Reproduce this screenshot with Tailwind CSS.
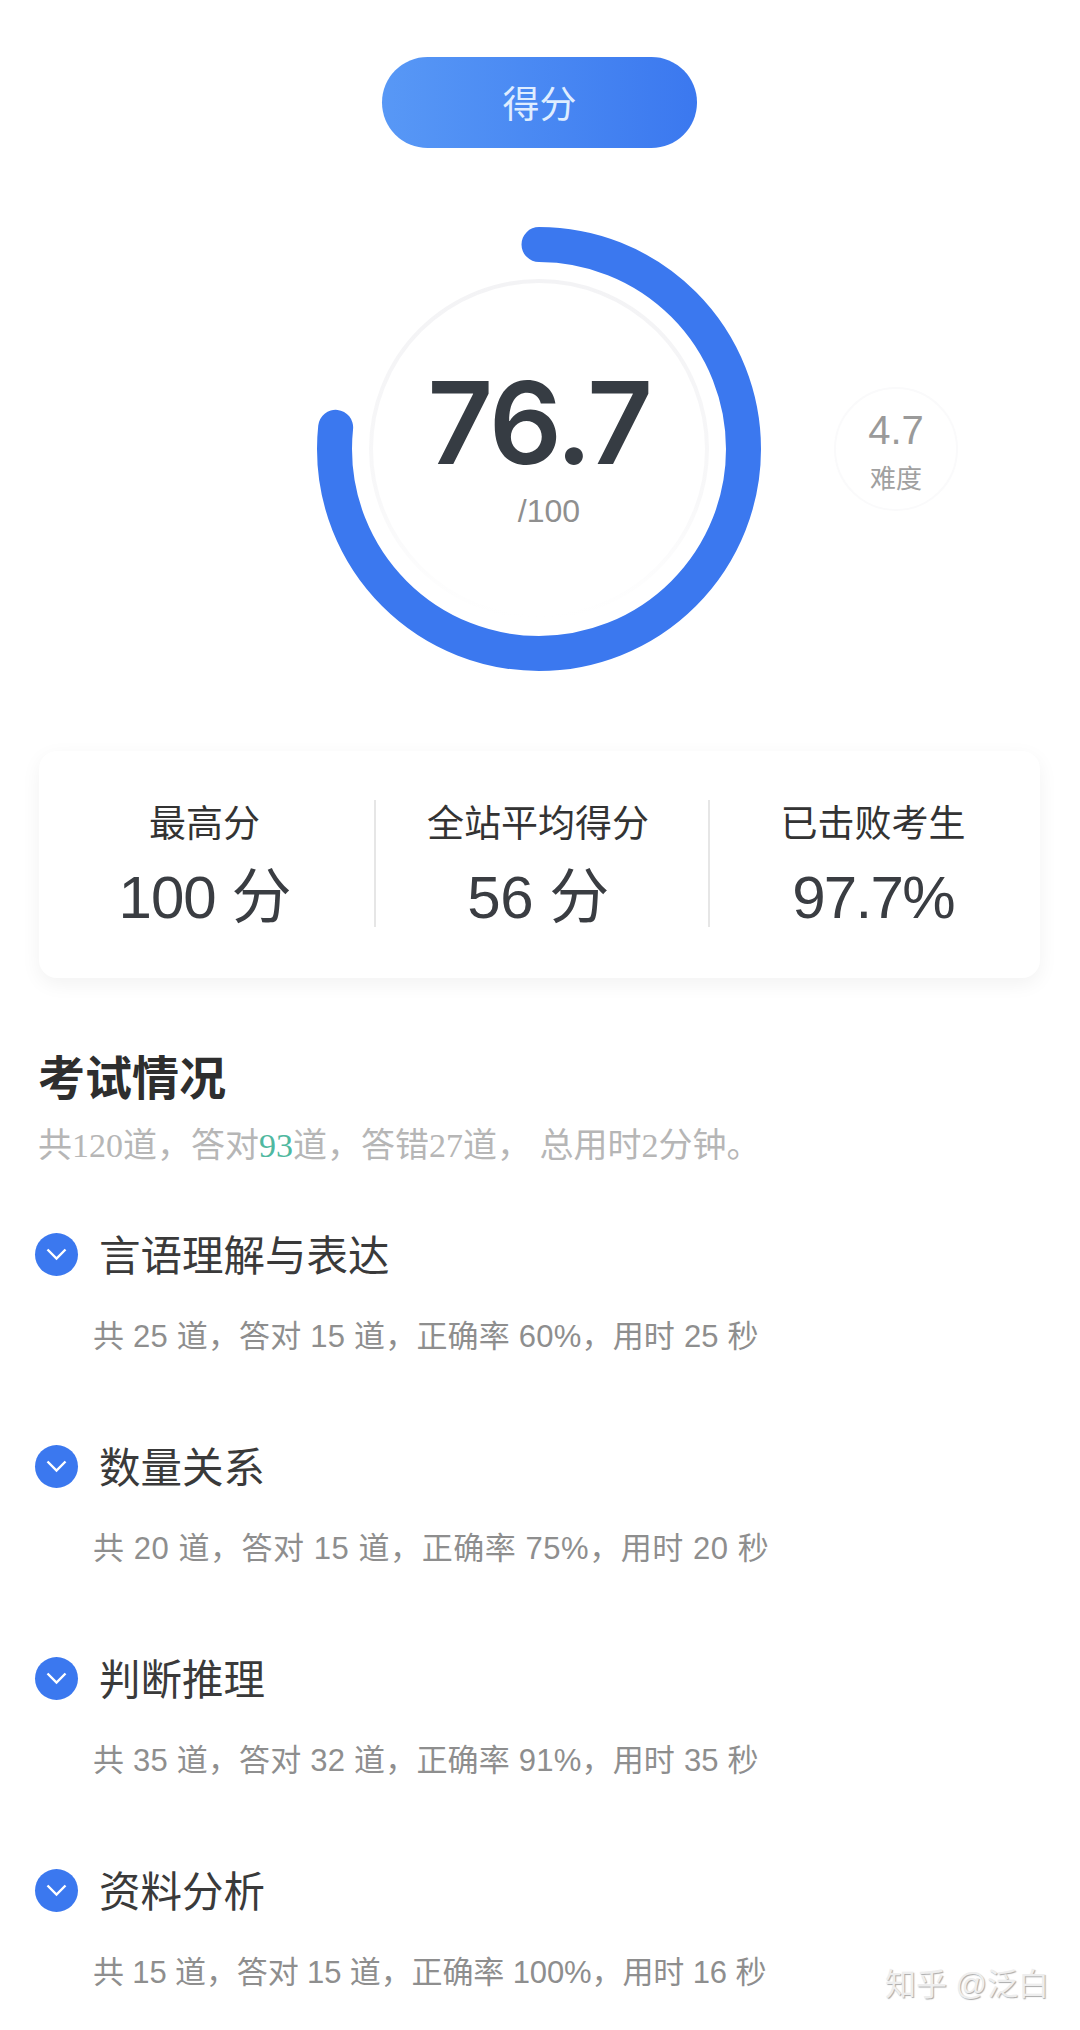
<!DOCTYPE html>
<html lang="zh-CN">
<head>
    <meta charset="UTF-8">
    <meta name="viewport" content="width=device-width, initial-scale=1.0">
    <title>得分</title>
    <script src="https://cdn.jsdelivr.net/npm/@tailwindcss/browser@4"></script>
</head>
<body class="bg-white">
<main class="relative w-[1080px] h-[2030px] overflow-hidden bg-white font-['Liberation_Sans','Noto_Sans_CJK_SC',sans-serif]">
    <div class="pt-[57px]">
        <div class="mx-[382px] h-[91px] w-[315px] pt-[6px] rounded-full bg-gradient-to-r from-[#5898f6] to-[#3b78ef] flex items-center justify-center text-[37px] text-[#dfedff]">得分</div>
    </div>

    <!-- score gauge -->
    <section class="flex items-center pl-[317px] mt-[79px]">
        <div class="relative w-[444px] h-[444px]">
            <svg class="absolute inset-0" width="444" height="444" viewBox="0 0 444 444">
                <defs>
                    <linearGradient id="innerRing" x1="0" y1="0" x2="0" y2="1">
                        <stop offset="0" stop-color="#f3f3f5"/>
                        <stop offset="0.65" stop-color="#f8f8f9"/>
                        <stop offset="1" stop-color="#ffffff"/>
                    </linearGradient>
                </defs>
                <circle cx="222" cy="222" r="168" fill="none" stroke="url(#innerRing)" stroke-width="4"/>
                <circle cx="222" cy="222" r="204.5" fill="none" stroke="#3b78ef" stroke-width="35" stroke-linecap="round" stroke-dasharray="985 1285" transform="rotate(-90 222 222)"/>
            </svg>
            <div class="absolute inset-0 flex flex-col items-center pt-[134px]">
                <div class="h-[124px] leading-[124px] text-[114px] font-semibold tracking-[-2.5px] text-[#363c43] font-['Inter',sans-serif]">76.7</div>
                <div class="mt-[8px] ml-[20px] h-[36px] leading-[36px] text-[32px] text-[#8f8f8f]">/100</div>
            </div>
        </div>
        <div class="ml-[73px] w-[124px] h-[124px] rounded-full border-2 border-[#fafafb] flex flex-col items-center pt-[18px]">
            <div class="h-[46px] leading-[46px] text-[40px] text-[#9a9a9a]">4.7</div>
            <div class="mt-[8px] h-[36px] leading-[36px] text-[26px] text-[#a0a0a0]">难度</div>
        </div>
    </section>

    <!-- stats card -->
    <section class="mx-[39px] mt-[80px] w-[1001px] h-[227px] rounded-[18px] bg-white shadow-[0_6px_20px_rgba(0,0,0,0.055)] pt-[49px] grid grid-cols-[335px_334px_332px]">
        <div class="h-[127px] pr-[4px] flex flex-col items-center">
            <div class="mt-[1px] h-[48px] leading-[48px] text-[37px] text-[#333]">最高分</div>
            <div class="mt-[14px] h-[70px] leading-[70px] text-[60px] tracking-[-1px] text-[#3a3d42]">100 分</div>
        </div>
        <div class="h-[127px] pr-[8px] flex flex-col items-center border-l-2 border-[#e6e6e6]">
            <div class="mt-[1px] h-[48px] leading-[48px] text-[37px] text-[#333]">全站平均得分</div>
            <div class="mt-[14px] h-[70px] leading-[70px] text-[60px] tracking-[-0.5px] text-[#3a3d42]">56 分</div>
        </div>
        <div class="h-[127px] pr-[4px] flex flex-col items-center border-l-2 border-[#e6e6e6]">
            <div class="mt-[1px] h-[48px] leading-[48px] text-[37px] text-[#333]">已击败考生</div>
            <div class="mt-[14px] h-[70px] leading-[70px] text-[60px] tracking-[-1.7px] text-[#3a3d42]">97.7%</div>
        </div>
    </section>

    <!-- exam summary -->
    <section class="pl-[38px] mt-[71px]">
        <h2 class="h-[60px] leading-[60px] text-[47px] font-bold text-[#2e2e2e]">考试情况</h2>
        <p class="mt-[17px] h-[40px] leading-[40px] text-[34px] text-[#b6b6b6] font-['Liberation_Serif','Noto_Sans_CJK_SC',serif]">共120道，答对<span class="text-[#4fb8a0]">93</span>道，答错27道， 总用时2分钟。</p>
    </section>

    <section class="mt-[60px] pl-[35px] flex flex-col gap-[77px]">
        <div>
            <div class="h-[60px] flex items-center">
                <span class="w-[43px] h-[43px] -mt-[4px] rounded-full bg-[#3b78ef] flex items-center justify-center">
                    <svg width="21" height="13" viewBox="0 0 21 13"><path d="M1.5 1.5 10.5 10.5l9-9" fill="none" stroke="#fff" stroke-width="2.4"/></svg>
                </span>
                <span class="ml-[21px] mt-[3px] text-[41.5px] text-[#3a3a3a]">言语理解与表达</span>
            </div>
            <p class="mt-[26px] ml-[58px] h-[50px] leading-[50px] text-[31px] tracking-[0.2px] text-[#8e8e8e]">共 25 道，答对 15 道，正确率 60%，用时 25 秒</p>
        </div>
        <div class="-mt-[1px]">
            <div class="h-[60px] flex items-center">
                <span class="w-[43px] h-[43px] -mt-[4px] rounded-full bg-[#3b78ef] flex items-center justify-center">
                    <svg width="21" height="13" viewBox="0 0 21 13"><path d="M1.5 1.5 10.5 10.5l9-9" fill="none" stroke="#fff" stroke-width="2.4"/></svg>
                </span>
                <span class="ml-[21px] mt-[3px] text-[41.5px] text-[#3a3a3a]">数量关系</span>
            </div>
            <p class="mt-[26px] ml-[58px] h-[50px] leading-[50px] text-[31px] tracking-[0.55px] text-[#8e8e8e]">共 20 道，答对 15 道，正确率 75%，用时 20 秒</p>
        </div>
        <div class="-mt-[1px]">
            <div class="h-[60px] flex items-center">
                <span class="w-[43px] h-[43px] -mt-[4px] rounded-full bg-[#3b78ef] flex items-center justify-center">
                    <svg width="21" height="13" viewBox="0 0 21 13"><path d="M1.5 1.5 10.5 10.5l9-9" fill="none" stroke="#fff" stroke-width="2.4"/></svg>
                </span>
                <span class="ml-[21px] mt-[3px] text-[41.5px] text-[#3a3a3a]">判断推理</span>
            </div>
            <p class="mt-[26px] ml-[58px] h-[50px] leading-[50px] text-[31px] tracking-[0.2px] text-[#8e8e8e]">共 35 道，答对 32 道，正确率 91%，用时 35 秒</p>
        </div>
        <div class="-mt-[1px]">
            <div class="h-[60px] flex items-center">
                <span class="w-[43px] h-[43px] -mt-[4px] rounded-full bg-[#3b78ef] flex items-center justify-center">
                    <svg width="21" height="13" viewBox="0 0 21 13"><path d="M1.5 1.5 10.5 10.5l9-9" fill="none" stroke="#fff" stroke-width="2.4"/></svg>
                </span>
                <span class="ml-[21px] mt-[3px] text-[41.5px] text-[#3a3a3a]">资料分析</span>
            </div>
            <p class="mt-[26px] ml-[58px] h-[50px] leading-[50px] text-[31px] tracking-[-0.12px] text-[#8e8e8e]">共 15 道，答对 15 道，正确率 100%，用时 16 秒</p>
        </div>
    </section>

    <!-- watermark -->
    <div class="absolute left-[885px] top-[1965px] text-[31px] leading-[40px] text-[#eeeeee] [text-shadow:1px_1px_1px_#aaa]">知乎 @泛白</div>
</main>
</body>
</html>
